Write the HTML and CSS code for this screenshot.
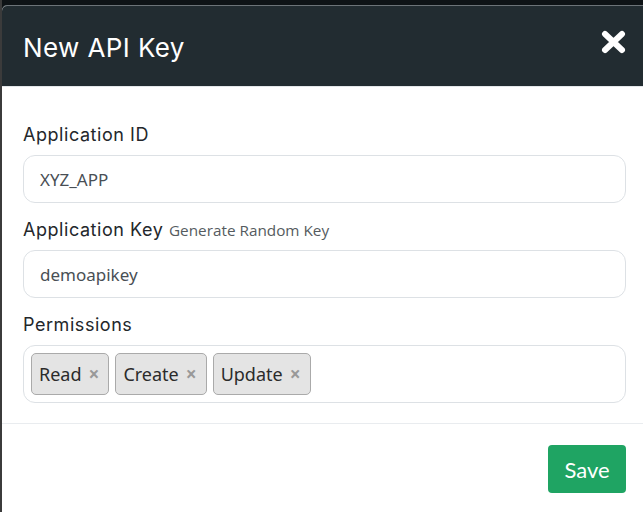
FILE: index.html
```html
<!DOCTYPE html>
<html>
<head>
<meta charset="utf-8">
<link rel="stylesheet" href="styles.css">
</head>
<body>
<div class="modal">
  <div class="modal-header">
    <h1 class="modal-title">New API Key</h1>
    <button class="close" aria-label="Close">
      <svg width="25" height="24" viewBox="0 0 25 24"><path d="M4 4 L21 20 M21 4 L4 20" stroke="#fff" stroke-width="6" stroke-linecap="round"/></svg>
    </button>
  </div>
  <div class="modal-body">
    <div class="field">
      <label class="label">Application ID</label>
      <div class="input">XYZ_APP</div>
    </div>
    <div class="field">
      <label class="label">Application Key <span class="hint">Generate Random Key</span></label>
      <div class="input">demoapikey</div>
    </div>
    <div class="field">
      <label class="label">Permissions</label>
      <div class="tags">
        <span class="tag">Read <span class="x">×</span></span>
        <span class="tag">Create <span class="x">×</span></span>
        <span class="tag">Update <span class="x">×</span></span>
      </div>
    </div>
  </div>
  <div class="modal-footer">
    <button class="btn-save">Save</button>
  </div>
</div>
</body>
</html>
```
FILE: styles.css
```css
html, body {
  margin: 0;
  padding: 0;
  height: 100%;
  overflow: hidden;
  background: #0e1316;
}
body {
  padding: 6px 0 0 2px;
  box-sizing: border-box;
  background: linear-gradient(to right, #3b3b3b 0, #3b3b3b 2px, #0e1316 2px);
}
.modal {
  width: 647px;
  height: 520px;
  background: #fff;
  border-radius: 5px 0 0 0;
  overflow: hidden;
  box-shadow: 0 -1px 0 #6c7378;
}
.modal-header {
  height: 81px;
  background: #222c31;
  display: flex;
  align-items: center;
  justify-content: space-between;
  padding: 0 23px 0 21px;
  box-sizing: border-box;
  border-bottom: 1px solid #e3e7ea;
}
.modal-title {
  margin: 0;
  color: #fff;
  font-family: "Inter", sans-serif;
  font-weight: 400;
  font-size: 26px;
  letter-spacing: 0.4px;
  padding-top: 2px;
}
.close {
  background: none;
  border: 0;
  padding: 0;
  display: flex;
  margin-top: -8px;
}
.modal-body {
  padding: 37px 21px 20px 21px;
}
.field {
  margin-bottom: 16px;
}
.field:last-child {
  margin-bottom: 0;
}
.label {
  display: block;
  font-family: "Inter", sans-serif;
  font-size: 18px;
  letter-spacing: 0.55px;
  color: #23272b;
  line-height: 22px;
  margin-bottom: 9px;
}
.hint {
  font-family: "Open Sans", sans-serif;
  font-size: 15.3px;
  letter-spacing: 0;
  color: #555b60;
}
.input {
  width: 603px;
  height: 48px;
  box-sizing: border-box;
  border: 1px solid #dde1e5;
  border-radius: 12px;
  padding: 0 16px;
  display: flex;
  align-items: center;
  font-family: "Noto Sans", sans-serif;
  font-size: 17px;
  color: #494f55;
}
.tags {
  width: 603px;
  height: 58px;
  box-sizing: border-box;
  border: 1px solid #dde1e5;
  border-radius: 12px;
  padding: 0 7px;
  display: flex;
  align-items: center;
  gap: 6px;
}
.tag {
  height: 42px;
  box-sizing: border-box;
  background: #e4e4e4;
  border: 1px solid #aaa;
  border-radius: 5px;
  display: flex;
  align-items: center;
  padding: 0 9px 0 7px;
  gap: 7px;
  font-family: "Noto Sans", sans-serif;
  font-size: 18px;
  color: #2b2b2b;
}
.x {
  color: #999;
  font-weight: 700;
  font-size: 19px;
}
.modal-footer {
  border-top: 1px solid #e9ecef;
  padding: 21px 23px;
  display: flex;
  justify-content: flex-end;
}
.btn-save {
  width: 78px;
  height: 48px;
  background: #1fa463;
  border: 0;
  border-radius: 4px;
  color: #fff;
  font-family: "Lato", sans-serif;
  font-size: 22px;
}
```
